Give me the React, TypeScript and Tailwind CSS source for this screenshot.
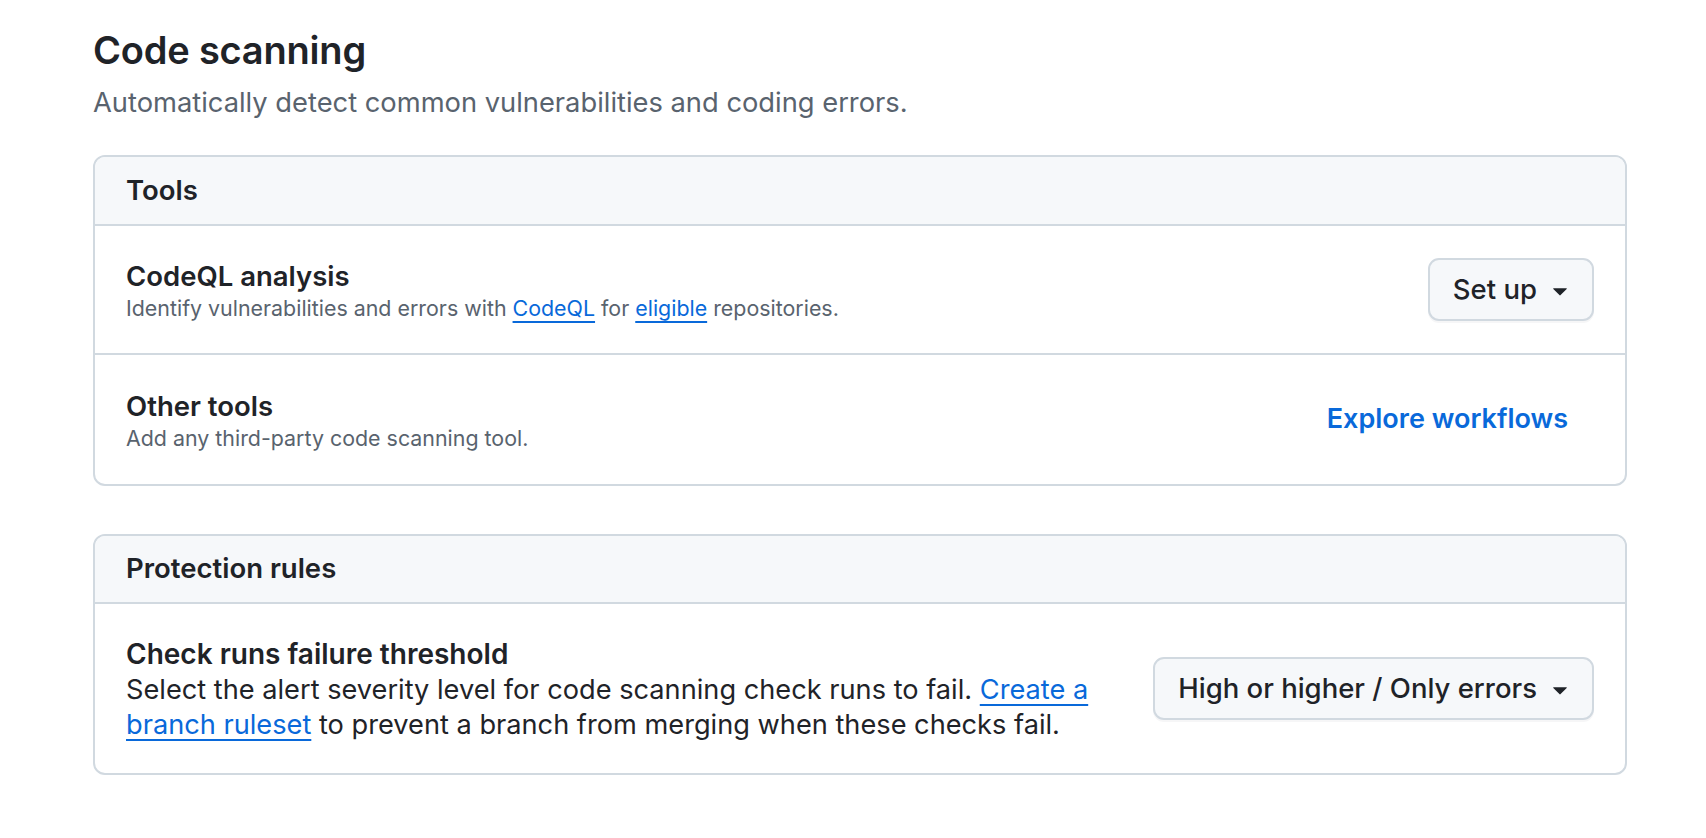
import React from 'react';

const font = { fontFamily: 'Inter, "Noto Sans", "Liberation Sans", sans-serif' };

const Caret: React.FC = () => (
    <svg viewBox="0 0 16 16" className="size-[30px] fill-current" aria-hidden="true">
        <path d="m4.427 7.427 3.396 3.396a.25.25 0 0 0 .354 0l3.396-3.396A.25.25 0 0 0 11.396 7H4.604a.25.25 0 0 0-.177.427Z" />
    </svg>
);

const Dropdown: React.FC<{ label: string }> = ({ label }) => (
    <button className="shrink-0 h-[63px] pl-[23px] pr-[17px] flex items-center gap-[8px] rounded-[11px] border-2 border-[#d1d9e0] bg-[#f6f8fa] text-[#1f2328] text-[27.5px] font-medium shadow-[0_2px_0_rgba(31,35,40,0.04)]">
        {label}
        <Caret />
    </button>
);

const Link: React.FC<{ children: React.ReactNode }> = ({ children }) => (
    <a href="#" className="text-[#0969da] underline decoration-2 underline-offset-[5px]">{children}</a>
);

const App: React.FC = () => {
    return (
        <div className="min-h-screen bg-white text-[#1f2328]" style={font}>
            <div className="w-[1534px] ml-[93px] pt-[27px]">
                {/* Page heading */}
                <h2 className="text-[38px] font-semibold leading-[47px] tracking-[-0.2px]">Code scanning</h2>
                <p className="mt-[9px] text-[27.3px] text-[#59636e] leading-[40px]">Automatically detect common vulnerabilities and coding errors.</p>

                {/* Tools */}
                <div className="mt-[32px] rounded-[12px] border-2 border-[#d1d9e0] overflow-hidden">
                    <div className="h-[69px] px-[31px] flex items-center bg-[#f6f8fa] border-b-2 border-[#d1d9e0]">
                        <h3 className="text-[27.5px] font-semibold">Tools</h3>
                    </div>
                    <div className="h-[129px] px-[31px] flex items-center justify-between border-b-2 border-[#d1d9e0]">
                        <div>
                            <div className="text-[27.5px] font-semibold leading-[36px]">CodeQL analysis</div>
                            <div className="text-[21.4px] text-[#59636e] leading-[28px]">
                                Identify vulnerabilities and errors with <Link>CodeQL</Link> for <Link>eligible</Link> repositories.
                            </div>
                        </div>
                        <Dropdown label="Set up" />
                    </div>
                    <div className="h-[129px] px-[31px] flex items-center justify-between">
                        <div>
                            <div className="text-[27.5px] font-semibold leading-[36px]">Other tools</div>
                            <div className="text-[21.4px] text-[#59636e] leading-[28px]">Add any third-party code scanning tool.</div>
                        </div>
                        <a href="#" className="mr-[26px] text-[27px] font-semibold text-[#0969da]">Explore workflows</a>
                    </div>
                </div>

                {/* Protection rules */}
                <div className="mt-[48px] rounded-[12px] border-2 border-[#d1d9e0] overflow-hidden">
                    <div className="h-[68px] px-[31px] flex items-center bg-[#f6f8fa] border-b-2 border-[#d1d9e0]">
                        <h3 className="text-[27.5px] font-semibold">Protection rules</h3>
                    </div>
                    <div className="h-[169px] px-[31px] flex items-center justify-between gap-[32px]">
                        <div className="flex-1">
                            <div className="text-[28px] font-semibold leading-[36px]">Check runs failure threshold</div>
                            <p className="text-[27.2px] leading-[35px]">
                                Select the alert severity level for code scanning check runs to fail. <Link>Create a branch ruleset</Link> to prevent a branch from merging when these checks fail.
                            </p>
                        </div>
                        <Dropdown label="High or higher / Only errors" />
                    </div>
                </div>
            </div>
        </div>
    );
};

export default App;
